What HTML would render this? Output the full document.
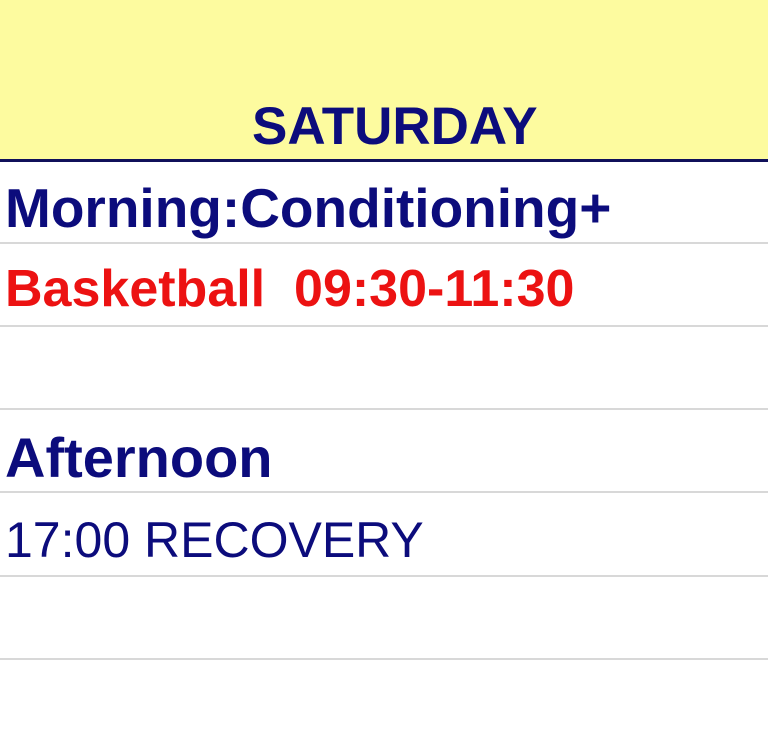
<!DOCTYPE html>
<html><head><style>
html,body{margin:0;padding:0;width:768px;height:740px;background:#fff;overflow:hidden;font-family:"Liberation Sans",sans-serif}
.hdr{position:absolute;left:0;top:0;width:768px;height:159px;background:#fdfb9f;border-bottom:3px solid #10105a}
.t{position:absolute;white-space:nowrap;line-height:1}
.l{position:absolute;left:0;width:768px;height:2px;background:#d8d8d8}
.b{font-weight:bold}
.n{color:#0c0c7c}
.r{color:#ec1212}
</style></head><body>
<div class="hdr"></div>
<div class="t b n" style="left:252px;top:100px;font-size:53px">SATURDAY</div>
<div class="t b n" style="left:5px;top:181px;font-size:55px">Morning:Conditioning+</div>
<div class="l" style="top:242px"></div>
<div class="t b r" style="left:5px;top:263px;font-size:52px">Basketball&nbsp; 09:30-11:30</div>
<div class="l" style="top:325px"></div>
<div class="l" style="top:408px"></div>
<div class="t b n" style="left:5px;top:430px;font-size:56px">Afternoon</div>
<div class="l" style="top:491px"></div>
<div class="t n" style="left:5px;top:515px;font-size:50px">17:00 RECOVERY</div>
<div class="l" style="top:575px"></div>
<div class="l" style="top:658px"></div>
</body></html>
